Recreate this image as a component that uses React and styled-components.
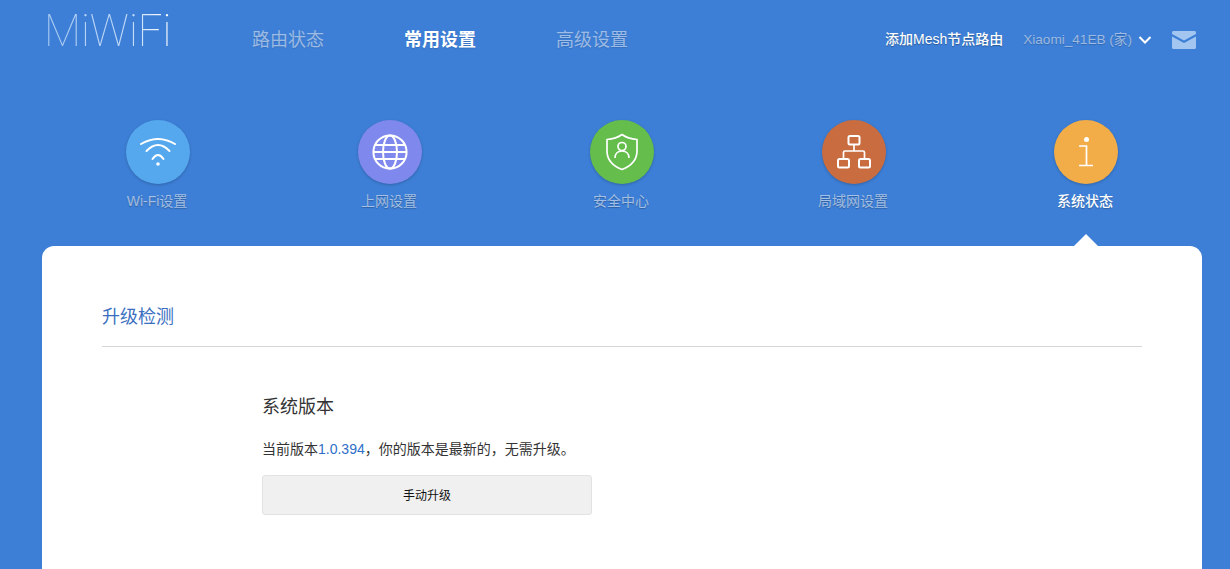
import React from "react";
import styled, { createGlobalStyle } from "styled-components";

const FONT = `"Liberation Sans", "Noto Sans CJK SC", sans-serif`;

const GlobalStyle = createGlobalStyle`
  html, body {
    margin: 0;
    padding: 0;
    height: 100%;
    overflow: hidden;
    background: #3d7fd7;
    font-family: ${FONT};
  }
  #root {
    height: 100%;
  }
`;

const Page = styled.div`
  display: flex;
  flex-direction: column;
  height: 100vh;
  overflow: hidden;
  background: #3d7fd7;
`;

const Header = styled.header`
  display: flex;
  align-items: flex-start;
  height: 120px;
  flex-shrink: 0;
  padding: 0 34px 0 44px;
`;

const Logo = styled.div`
  width: 208px;
  height: 50px;
  margin-top: 6px;
  font-family: Roboto, "Liberation Sans", sans-serif;
  font-weight: 100;
  font-size: 44px;
  line-height: 50px;
  transform: scaleX(0.98);
  transform-origin: left center;
  background: linear-gradient(90deg, #a9cbf2 0%, #c5dcf7 45%, #ffffff 60%);
  background-clip: text;
  -webkit-background-clip: text;
  color: transparent;
`;

const Nav = styled.nav`
  display: flex;
  gap: 80px;
  margin-top: 30px;
`;

const NavItem = styled.a`
  font-size: 18px;
  line-height: 20px;
  font-weight: ${(p) => (p.$active ? 700 : 400)};
  color: ${(p) => (p.$active ? "#ffffff" : "rgba(255, 255, 255, 0.5)")};
  text-shadow: 0 1px 1px rgba(0, 0, 0, 0.12);
`;

const UserBar = styled.div`
  display: flex;
  align-items: center;
  margin-left: auto;
  margin-top: 30px;
  height: 20px;
`;

const MeshLink = styled.a`
  margin-bottom: 4px;
  font-size: 14px;
  font-weight: 500;
  color: #ffffff;
  text-shadow: 0 1px 1px rgba(0, 0, 0, 0.3);
`;

const RouterName = styled.span`
  margin-left: 20px;
  margin-bottom: 4px;
  font-size: 13.6px;
  color: rgba(255, 255, 255, 0.5);
  text-shadow: 0 1px 1px rgba(0, 0, 0, 0.2);
`;

const Chevron = styled.svg`
  margin-left: 6px;
  width: 14px;
  height: 10px;
`;

const Mail = styled.svg`
  margin-left: 20px;
  width: 24px;
  height: 18px;
`;

const Tabs = styled.div`
  display: grid;
  grid-template-columns: repeat(5, 232px);
  flex-shrink: 0;
  height: 126px;
  margin-left: 42px;
`;

const Tab = styled.a`
  display: flex;
  flex-direction: column;
  align-items: center;
`;

const Circle = styled.div`
  display: flex;
  align-items: center;
  justify-content: center;
  width: 64px;
  height: 64px;
  border-radius: 50%;
  background: ${(p) => p.$color};
  box-shadow: 0 1px 3px rgba(0, 0, 0, 0.22);
`;

const TabLabel = styled.span`
  margin-top: 7px;
  margin-right: 2px;
  font-size: 14px;
  line-height: 20px;
  font-weight: ${(p) => (p.$active ? 500 : 400)};
  color: ${(p) => (p.$active ? "#ffffff" : "rgba(255, 255, 255, 0.55)")};
  text-shadow: 0 1px 1px rgba(0, 0, 0, 0.25);
`;

const Card = styled.main`
  position: relative;
  flex: 1;
  width: 1160px;
  margin-left: 42px;
  padding: 0 60px;
  box-sizing: border-box;
  background: #ffffff;
  border-radius: 12px 12px 0 0;
`;

const Pointer = styled.span`
  position: absolute;
  top: -12px;
  left: 1032px;
  width: 0;
  height: 0;
  border-left: 12px solid transparent;
  border-right: 12px solid transparent;
  border-bottom: 12px solid #ffffff;
`;

const SectionHead = styled.div`
  display: flex;
  align-items: center;
  height: 101px;
  padding-top: 38px;
  box-sizing: border-box;
  border-bottom: 1px solid #d6d6d6;
`;

const SectionTitle = styled.h2`
  margin: 0;
  font-size: 18px;
  font-weight: 400;
  color: #3a6fbf;
`;

const SectionBody = styled.section`
  padding: 48px 0 0 160px;
`;

const VersionTitle = styled.h3`
  margin: 0;
  font-size: 18px;
  line-height: 24px;
  font-weight: 400;
  color: #333333;
`;

const VersionText = styled.p`
  margin: 20px 0 0;
  font-size: 14px;
  line-height: 20px;
  color: #333333;
`;

const VersionNumber = styled.span`
  color: #2f6fc8;
`;

const UpgradeButton = styled.button`
  display: block;
  width: 330px;
  height: 40px;
  margin-top: 16px;
  padding: 0 0 2px;
  background: #f0f0f0;
  border: 1px solid #e2e2e2;
  border-radius: 3px;
  font-family: ${FONT};
  font-size: 12px;
  color: #111111;
`;

const line = {
  fill: "none",
  stroke: "#fff",
  strokeWidth: 1.7,
};

const WifiIcon = () => (
  <svg width="36" height="28" viewBox="0 0 36 28">
    <path d="M1 6Q18 -4 35 6" {...line} strokeWidth="2" strokeLinecap="round" />
    <path d="M6.5 13Q18 1 29.5 13" {...line} strokeWidth="2" strokeLinecap="round" />
    <path d="M12.5 21Q18 13 23.5 21" {...line} strokeWidth="2" strokeLinecap="round" />
    <circle cx="18" cy="26" r="1.8" fill="#fff" />
  </svg>
);

const GlobeIcon = () => (
  <svg width="36" height="36" viewBox="0 0 36 36">
    <circle cx="18" cy="18" r="16.6" {...line} strokeWidth="2" />
    <ellipse cx="18" cy="18" rx="7" ry="16.6" {...line} strokeWidth="2" />
    <path d="M1.5 18H34.5M3 11H33M3 25H33" {...line} strokeWidth="2" />
  </svg>
);

const ShieldIcon = () => (
  <svg width="34" height="38" viewBox="0 0 34 38">
    <path
      d="M17 1.5C21 4.5 26 6 32 6.5V18C32 27 26 33 17 36.5C8 33 2 27 2 18V6.5C8 6 13 4.5 17 1.5Z"
      {...line}
      strokeLinejoin="round"
    />
    <circle cx="17" cy="13.5" r="4" {...line} />
    <path d="M10 25C10 20.5 13 18 17 18C21 18 24 20.5 24 25" {...line} />
  </svg>
);

const NetworkIcon = () => (
  <svg width="34" height="34" viewBox="0 0 34 34">
    <rect x="11.5" y="1" width="11" height="8.5" rx="1.5" {...line} strokeWidth="2" />
    <rect x="1" y="24" width="11" height="8.5" rx="1.5" {...line} strokeWidth="2" />
    <rect x="22" y="24" width="11" height="8.5" rx="1.5" {...line} strokeWidth="2" />
    <path d="M17 9.5V16M6.5 24V17.5C6.5 16.5 7 16 8 16H26C27 16 27.5 16.5 27.5 17.5V24" {...line} />
  </svg>
);

const InfoIcon = () => (
  <svg width="16" height="30" viewBox="0 0 16 30">
    <circle cx="8.5" cy="2.6" r="2.5" fill="#fff" />
    <path d="M1 9H8.5V28.5M1 28.5H15" {...line} />
  </svg>
);

const tabs = [
  { label: "Wi-Fi设置", color: "#55a8ed", icon: <WifiIcon /> },
  { label: "上网设置", color: "#7f88ec", icon: <GlobeIcon /> },
  { label: "安全中心", color: "#65bd4c", icon: <ShieldIcon /> },
  { label: "局域网设置", color: "#c96d41", icon: <NetworkIcon /> },
  { label: "系统状态", color: "#f2ad48", icon: <InfoIcon />, active: true },
];

const App = () => {
  return (
    <Page>
      <GlobalStyle />
      <Header>
        <Logo>MiWiFi</Logo>
        <Nav>
          <NavItem>路由状态</NavItem>
          <NavItem $active>常用设置</NavItem>
          <NavItem>高级设置</NavItem>
        </Nav>
        <UserBar>
          <MeshLink>添加Mesh节点路由</MeshLink>
          <RouterName>Xiaomi_41EB (家)</RouterName>
          <Chevron viewBox="0 0 14 10">
            <path d="M1.5 2L7 7.5L12.5 2" fill="none" stroke="#fff" strokeWidth="2" />
          </Chevron>
          <Mail viewBox="0 0 24 18">
            <path
              d="M0 1.5C0 .7.7 0 1.5 0H22.5C23.3 0 24 .7 24 1.5V3L12 9.5L0 3Z"
              fill="#a3c6f0"
            />
            <path
              d="M0 5.5L12 12L24 5.5V16.5C24 17.3 23.3 18 22.5 18H1.5C.7 18 0 17.3 0 16.5Z"
              fill="#a3c6f0"
            />
          </Mail>
        </UserBar>
      </Header>
      <Tabs>
        {tabs.map((tab) => (
          <Tab key={tab.label}>
            <Circle $color={tab.color}>{tab.icon}</Circle>
            <TabLabel $active={tab.active}>{tab.label}</TabLabel>
          </Tab>
        ))}
      </Tabs>
      <Card>
        <Pointer />
        <SectionHead>
          <SectionTitle>升级检测</SectionTitle>
        </SectionHead>
        <SectionBody>
          <VersionTitle>系统版本</VersionTitle>
          <VersionText>
            当前版本<VersionNumber>1.0.394</VersionNumber>，你的版本是最新的，无需升级。
          </VersionText>
          <UpgradeButton>手动升级</UpgradeButton>
        </SectionBody>
      </Card>
    </Page>
  );
};

export default App;
